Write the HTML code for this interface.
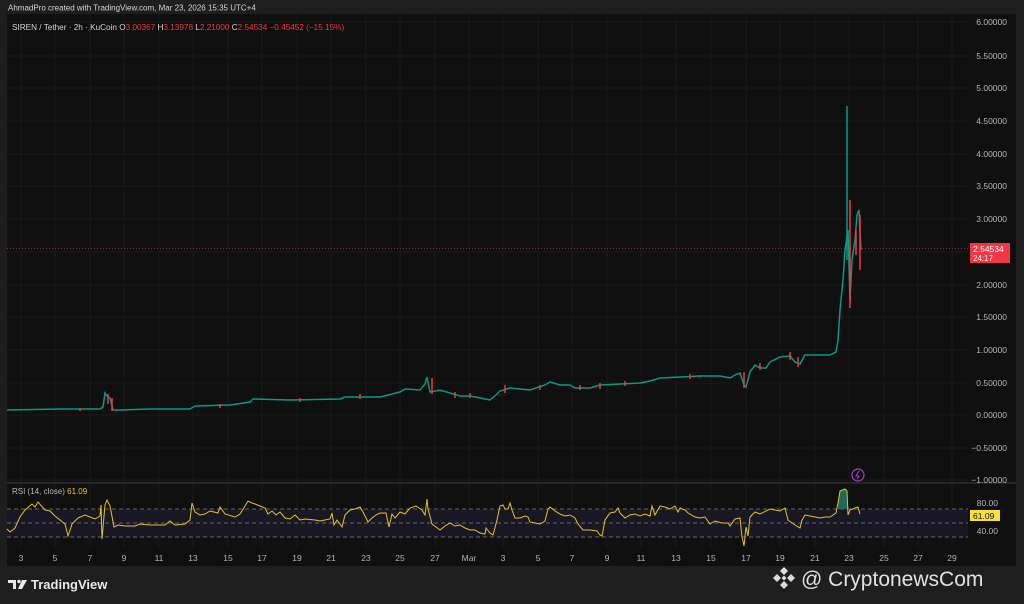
<!DOCTYPE html>
<html><head><meta charset="utf-8"><style>
html,body{margin:0;padding:0;width:1024px;height:604px;overflow:hidden;background:#1e1e1e;font-family:"Liberation Sans",sans-serif}
svg{position:absolute;left:0;top:0}
</style></head><body>
<svg width="1024" height="604" viewBox="0 0 1024 604">
<rect x="0" y="0" width="1024" height="604" fill="#1e1e1e"/>
<rect x="7" y="14" width="1009" height="552" fill="#0f0f0f"/>
<text x="8" y="10.5" fill="#d1d4dc" font-size="8">AhmadPro created with TradingView.com, Mar 23, 2026 15:35 UTC+4</text>
<!-- grid -->
<g stroke="#181818" stroke-width="1">
<line x1="7" x2="968" y1="22" y2="22"/><line x1="7" x2="968" y1="56" y2="56"/><line x1="7" x2="968" y1="88" y2="88"/><line x1="7" x2="968" y1="121" y2="121"/><line x1="7" x2="968" y1="154" y2="154"/><line x1="7" x2="968" y1="186" y2="186"/><line x1="7" x2="968" y1="219" y2="219"/><line x1="7" x2="968" y1="252" y2="252"/><line x1="7" x2="968" y1="285" y2="285"/><line x1="7" x2="968" y1="317" y2="317"/><line x1="7" x2="968" y1="350" y2="350"/><line x1="7" x2="968" y1="383" y2="383"/><line x1="7" x2="968" y1="415" y2="415"/><line x1="7" x2="968" y1="448" y2="448"/><line x1="7" x2="968" y1="480" y2="480"/>
<line x1="21" x2="21" y1="14" y2="548"/><line x1="55" x2="55" y1="14" y2="548"/><line x1="90" x2="90" y1="14" y2="548"/><line x1="124" x2="124" y1="14" y2="548"/><line x1="159" x2="159" y1="14" y2="548"/><line x1="193" x2="193" y1="14" y2="548"/><line x1="228" x2="228" y1="14" y2="548"/><line x1="262" x2="262" y1="14" y2="548"/><line x1="297" x2="297" y1="14" y2="548"/><line x1="331" x2="331" y1="14" y2="548"/><line x1="366" x2="366" y1="14" y2="548"/><line x1="400" x2="400" y1="14" y2="548"/><line x1="435" x2="435" y1="14" y2="548"/><line x1="469" x2="469" y1="14" y2="548"/><line x1="503" x2="503" y1="14" y2="548"/><line x1="538" x2="538" y1="14" y2="548"/><line x1="572" x2="572" y1="14" y2="548"/><line x1="607" x2="607" y1="14" y2="548"/><line x1="641" x2="641" y1="14" y2="548"/><line x1="676" x2="676" y1="14" y2="548"/><line x1="711" x2="711" y1="14" y2="548"/><line x1="746" x2="746" y1="14" y2="548"/><line x1="780" x2="780" y1="14" y2="548"/><line x1="815" x2="815" y1="14" y2="548"/><line x1="849" x2="849" y1="14" y2="548"/><line x1="884" x2="884" y1="14" y2="548"/><line x1="918" x2="918" y1="14" y2="548"/><line x1="952" x2="952" y1="14" y2="548"/>
</g>
<line x1="7" x2="1016" y1="483" y2="483" stroke="#262626" stroke-width="2"/>
<!-- legend -->
<text x="12" y="30" font-size="8.2" fill="#d1d4dc">SIREN / Tether · 2h · KuCoin  O<tspan fill="#f23645">3.00367</tspan>  H<tspan fill="#f23645">3.13978</tspan>  L<tspan fill="#f23645">2.21000</tspan>  C<tspan fill="#f23645">2.54534  −0.45452 (−15.15%)</tspan></text>
<!-- price axis labels -->
<g font-size="8.5" fill="#b2b5be" text-anchor="end">
<text x="1007" y="25">6.00000</text><text x="1007" y="59">5.50000</text><text x="1007" y="91">5.00000</text><text x="1007" y="124">4.50000</text><text x="1007" y="157">4.00000</text><text x="1007" y="189">3.50000</text><text x="1007" y="222">3.00000</text><text x="1007" y="288">2.00000</text><text x="1007" y="320">1.50000</text><text x="1007" y="353">1.00000</text><text x="1007" y="386">0.50000</text><text x="1007" y="418">0.00000</text><text x="1007" y="451">−0.50000</text><text x="1007" y="483">−1.00000</text>
<text x="998" y="506">80.00</text><text x="998" y="534">40.00</text>
</g>
<!-- current price line -->
<line x1="7" x2="968" y1="248.5" y2="248.5" stroke="#f23645" stroke-width="1" stroke-dasharray="1,2" opacity="0.6"/>
<rect x="970" y="243" width="40" height="20" fill="#f23645"/>
<text x="973" y="252" font-size="8.5" fill="#fff">2.54534</text>
<text x="973" y="261" font-size="8" fill="#fff">24:17</text>
<!-- price -->
<polyline fill="none" stroke="#089981" stroke-width="1.5" points="7,410 60,409 100,409 103,407 105,393 107,396 110,398 113,410 118,410 150,409 190,409 195,406 230,405 250,402 253,399 290,400 340,399 345,397 380,397 400,392 405,389 420,390 425,384 427,377 430,392 440,390 460,396 470,396 480,398 490,400 495,396 500,391 510,388 520,389 530,390 545,385 550,382 560,385 570,385 575,388 590,388 600,385 640,383 650,381 660,378 700,376 720,376 730,378 735,375 740,373 744,385 746,387 750,372 755,365 760,368 766,368 770,362 780,357 790,356 795,362 800,364 805,355 830,355 836,352 838,340 840,310 843,280 845,250 848,230 850,300 852,260 855,240 857,215 859,210 861,250"/>
<line x1="847" x2="847" y1="106" y2="260" stroke="#089981" stroke-width="1.5"/>
<g stroke="#f23645" stroke-width="1.5">
<line x1="108" x2="108" y1="394" y2="404"/><line x1="112" x2="112" y1="398" y2="411"/><line x1="432" x2="432" y1="378" y2="394"/><line x1="470" x2="470" y1="393" y2="398"/><line x1="505" x2="505" y1="385" y2="393"/><line x1="580" x2="580" y1="385" y2="390"/><line x1="625" x2="625" y1="381" y2="386"/><line x1="690" x2="690" y1="374" y2="379"/><line x1="744" x2="744" y1="372" y2="388"/><line x1="798" x2="798" y1="357" y2="367"/><line x1="850" x2="850" y1="200" y2="308"/><line x1="860" x2="860" y1="215" y2="270"/><line x1="856" x2="856" y1="230" y2="255"/>
<line x1="80" x2="80" y1="408" y2="411"/><line x1="220" x2="220" y1="404" y2="408"/><line x1="300" x2="300" y1="398" y2="402"/><line x1="360" x2="360" y1="394" y2="399"/><line x1="455" x2="455" y1="392" y2="398"/><line x1="540" x2="540" y1="385" y2="390"/><line x1="600" x2="600" y1="383" y2="389"/><line x1="760" x2="760" y1="363" y2="370"/><line x1="790" x2="790" y1="352" y2="360"/></g>
<!-- RSI band -->
<rect x="7" y="509" width="961" height="28" fill="#1a1724"/>
<g stroke="#666" stroke-width="1" stroke-dasharray="4,3">
<line x1="7" x2="968" y1="509" y2="509"/><line x1="7" x2="968" y1="523" y2="523"/><line x1="7" x2="968" y1="537" y2="537"/></g>
<text x="12" y="494" font-size="8" fill="#b2b5be">RSI (14, close) <tspan fill="#e8c62c">61.09</tspan></text>
<polygon points="838,503 840,491 845,489 847,491 847,509 838,509" fill="#1d6b55"/>
<polyline fill="none" stroke="#e2c226" stroke-width="1" points="7,529 10,532 15,528 20,517 25,510 32,504 35,507 38,502 45,510 50,511 55,516 60,520 65,524 68,536 72,524 78,518 85,515 90,517 95,519 100,516 101,505 102,539 105,505 107,500 110,506 114,527 118,525 125,526 135,526 140,524 150,525 165,525 170,521 175,525 185,524 190,520 192,503 195,512 200,515 205,514 210,511 218,513 220,507 225,514 235,517 240,514 245,506 248,501 252,503 255,504 265,508 268,514 272,511 276,515 280,512 285,518 290,519 295,515 300,520 305,519 315,520 320,521 330,519 332,513 334,525 337,520 342,527 345,515 350,510 355,509 360,507 363,512 368,522 372,518 376,515 380,513 386,513 389,527 392,514 395,518 400,512 405,514 410,508 416,506 422,510 425,515 427,499 428,509 432,524 440,530 445,526 450,523 455,526 460,525 465,528 470,530 475,530 480,533 485,534 486,528 490,533 493,535 497,520 500,506 503,505 505,509 508,509 510,503 512,510 515,518 520,518 525,516 528,517 530,522 535,523 540,524 545,521 548,509 550,507 555,511 560,514 565,516 570,515 575,518 578,524 583,530 590,530 597,531 600,535 602,536 605,520 610,513 615,512 618,508 620,513 625,518 630,515 635,514 640,516 645,514 650,516 652,506 655,515 660,506 665,507 670,509 675,506 678,512 680,508 685,510 688,513 695,517 700,518 705,517 710,524 715,521 722,523 728,523 730,526 735,519 740,518 742,537 744,546 746,527 748,536 750,517 755,512 760,514 770,509 780,511 785,508 788,520 795,525 800,528 802,520 805,515 815,517 820,518 825,517 830,517 836,513 838,503 840,491 845,489 847,491 848,515 850,510 855,508 858,507 860,514"/>
<rect x="970" y="510" width="30" height="11" fill="#f5e13a"/>
<text x="973" y="519" font-size="8.5" fill="#131313">61.09</text>
<!-- lightning -->
<circle cx="858" cy="475" r="6" fill="none" stroke="#a43fc9" stroke-width="1.2"/>
<path d="M859,471 L856,476 L859,476 L857,479" fill="none" stroke="#a43fc9" stroke-width="1.1"/>
<!-- time axis -->
<g font-size="8.5" fill="#b2b5be" text-anchor="middle">
<text x="21" y="561">3</text><text x="55" y="561">5</text><text x="90" y="561">7</text><text x="124" y="561">9</text><text x="159" y="561">11</text><text x="193" y="561">13</text><text x="228" y="561">15</text><text x="262" y="561">17</text><text x="297" y="561">19</text><text x="331" y="561">21</text><text x="366" y="561">23</text><text x="400" y="561">25</text><text x="435" y="561">27</text><text x="469" y="561">Mar</text><text x="503" y="561">3</text><text x="538" y="561">5</text><text x="572" y="561">7</text><text x="607" y="561">9</text><text x="641" y="561">11</text><text x="676" y="561">13</text><text x="711" y="561">15</text><text x="746" y="561">17</text><text x="780" y="561">19</text><text x="815" y="561">21</text><text x="849" y="561">23</text><text x="884" y="561">25</text><text x="918" y="561">27</text><text x="952" y="561">29</text>
</g>
<!-- footer: TradingView -->
<g fill="#e8e8e8">
<path d="M8,580 h8 v9 h-3 v-6 h-5 z"/><circle cx="19" cy="581.5" r="1.7"/><path d="M22,580 h5 l-5,9 h-4 z"/>
</g>
<text x="31" y="589" font-size="13" font-weight="bold" fill="#e8e8e8">TradingView</text>
<!-- watermark -->
<g transform="translate(784,578)">
<path d="M0,-11 L4,-7 L0,-3 L-4,-7 Z M-7,-4 L-3,0 L-7,4 L-11,0 Z M7,-4 L11,0 L7,4 L3,0 Z M0,3 L4,7 L0,11 L-4,7 Z M0,-2.5 L2.5,0 L0,2.5 L-2.5,0 Z" fill="#dcdcdc"/>
</g>
<text x="801" y="586" font-size="21" fill="#e0e0e0">@ CryptonewsCom</text>
</svg>
</body></html>
